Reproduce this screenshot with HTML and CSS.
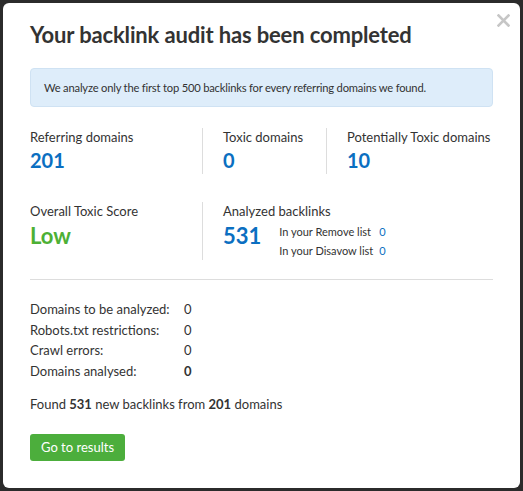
FILE: index.html
```html
<!DOCTYPE html>
<html lang="en">
<head>
  <meta charset="UTF-8">
  <title>Backlink Audit</title>
  <link rel="stylesheet" href="styles.css">
</head>
<body>

<div class="modal">
  <button class="close" type="button" aria-label="Close">
    <svg width="13" height="13" viewBox="0 0 13 13"><path d="M1.5 1.5 L11.5 11.5 M11.5 1.5 L1.5 11.5" stroke="#c6c6c6" stroke-width="2.6" stroke-linecap="square"/></svg>
  </button>

  <h1 class="title">Your backlink audit has been completed</h1>

  <div class="notice">We analyze only the first top 500 backlinks for every referring domains we found.</div>

  <div class="stats stats-top">
    <div class="stat">
      <div class="stat-label">Referring domains</div>
      <div class="stat-value">201</div>
    </div>
    <div class="stat">
      <div class="stat-label">Toxic domains</div>
      <div class="stat-value">0</div>
    </div>
    <div class="stat">
      <div class="stat-label">Potentially Toxic domains</div>
      <div class="stat-value">10</div>
    </div>
  </div>

  <div class="stats stats-bottom">
    <div class="stat">
      <div class="stat-label">Overall Toxic Score</div>
      <div class="stat-value big green">Low</div>
    </div>
    <div class="stat">
      <div class="stat-label">Analyzed backlinks</div>
      <div class="analyzed">
        <div class="stat-value big">531</div>
        <div class="sublist">
          <div class="sub-row"><span class="sub-label">In your Remove list</span><a href="#" class="sub-value">0</a></div>
          <div class="sub-row"><span class="sub-label">In your Disavow list</span><a href="#" class="sub-value">0</a></div>
        </div>
      </div>
    </div>
  </div>

  <hr class="divider">

  <div class="details">
    <span>Domains to be analyzed:</span><span>0</span>
    <span>Robots.txt restrictions:</span><span>0</span>
    <span>Crawl errors:</span><span>0</span>
    <span>Domains analysed:</span><b>0</b>
  </div>

  <p class="found">Found <b>531</b> new backlinks from <b>201</b> domains</p>

  <button class="results-btn" type="button">Go to results</button>
</div>

</body>
</html>
```

FILE: styles.css
```css
body {
  margin: 0;
  background: #2b2b2b;
  font-family: Lato, "Noto Sans", sans-serif;
  color: #333;
}
.modal {
  position: relative;
  box-sizing: border-box;
  margin: 3px;
  height: 485px;
  padding: 19px 27px 0 27px;
  background: #fff;
  border-radius: 6px;
}
.close {
  position: absolute;
  top: 11px;
  right: 10px;
  padding: 0;
  border: none;
  background: none;
  line-height: 0;
  cursor: pointer;
}
.title {
  margin: 0;
  font-size: 22px;
  line-height: 26px;
  font-weight: 700;
  letter-spacing: -0.15px;
  color: #333;
}
.notice {
  margin-top: 20px;
  padding: 0 13px;
  line-height: 37px;
  font-size: 11.2px;
  letter-spacing: -0.2px;
  white-space: nowrap;
  background: #deedfa;
  border: 1px solid #cfe2f3;
  border-radius: 4px;
}
.stats {
  display: grid;
  grid-template-columns: 172px 124px 1fr;
  white-space: nowrap;
}
.stats-top {
  margin-top: 21px;
}
.stats-bottom {
  margin-top: 28px;
  height: 56px;
}
.stat + .stat {
  border-left: 1px solid #ddd;
  padding-left: 20px;
}
.stats-bottom .stat:nth-child(2) {
  grid-column: 2 / 4;
}
.stat-label {
  font-size: 13px;
  line-height: 18px;
}
.stat-value {
  font-size: 20px;
  line-height: 28px;
  font-weight: 700;
  color: #0b6fc1;
}
.stat-value.big {
  font-size: 22px;
  line-height: 32px;
}
.green {
  color: #4db035;
}
.analyzed {
  display: flex;
  align-items: flex-start;
  gap: 18px;
}
.sublist {
  padding-top: 2px;
}
.sub-row {
  display: flex;
  font-size: 11px;
  line-height: 19px;
}
.sub-label {
  width: 100px;
}
.sub-value {
  color: #0b6fc1;
  text-decoration: none;
}
.divider {
  margin: 21px 0 0;
  border: none;
  border-top: 1px solid #ddd;
}
.details {
  display: grid;
  grid-template-columns: 154px 1fr;
  margin-top: 19px;
  font-size: 13px;
  line-height: 20.7px;
}
.found {
  margin: 12px 0 0;
  font-size: 13px;
  line-height: 20px;
}
.results-btn {
  margin-top: 20px;
  height: 27px;
  padding: 0 11px;
  border: none;
  border-radius: 3px;
  background: #4cae3c;
  color: #fff;
  font-family: inherit;
  font-size: 13px;
  cursor: pointer;
}
```
